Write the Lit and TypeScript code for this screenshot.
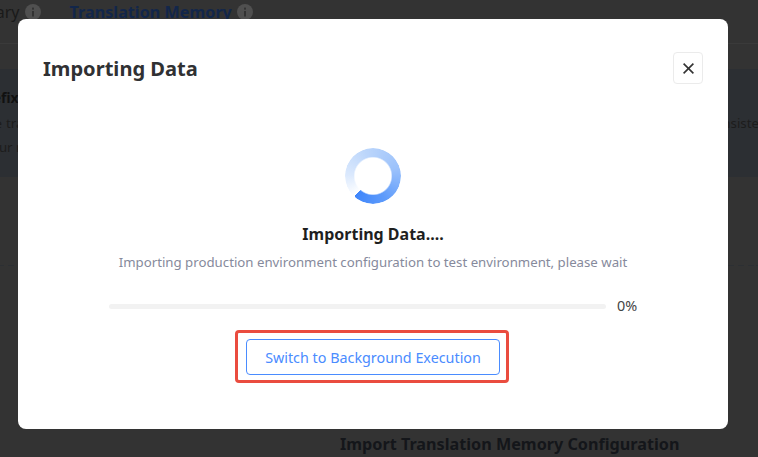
import { LitElement, html, css } from "lit";
import { customElement } from "lit/decorators.js";

const info = html`<svg class="info" viewBox="0 0 16 16"><circle cx="8" cy="8" r="8" fill="#505050"></circle><rect x="7" y="7" width="2" height="5.5" fill="#333"></rect><rect x="7" y="3.6" width="2" height="2" fill="#333"></rect></svg>`;

@customElement("app-root")
export class AppRoot extends LitElement {
  static styles = css`
    :host {
      display: block;
      position: relative;
      width: 758px;
      height: 457px;
      overflow: hidden;
      background: #333;
      font-family: "Noto Sans", "Open Sans", sans-serif;
    }
    .page { display: flex; flex-direction: column; height: 100%; }
    .tabs {
      height: 44px;
      box-sizing: border-box;
      border-bottom: 1px solid #3a3a3a;
      display: flex;
      align-items: flex-start;
      padding-top: 1px;
      margin-left: -45px;
      gap: 29px;
      font-size: 16px;
      line-height: 22px;
      color: #1a1a1a;
    }
    .tab { display: flex; align-items: center; gap: 5px; white-space: nowrap; }
    .tab.active { color: #12264a; font-weight: 700; font-size: 16.2px; }
    .info { width: 16px; height: 16px; }
    .banner {
      margin-top: 25px;
      height: 108px;
      background: #2c2f33;
      box-sizing: border-box;
      padding-top: 17px;
      color: #1c1c1c;
      font-size: 13.3px;
      line-height: 24.5px;
      white-space: nowrap;
    }
    .banner b { color: #111; font-size: 14px; display: block; margin-left: -22px; }
    .line2 { margin-left: -21px; word-spacing: 0.45px; }
    .line3 { margin-left: -16px; }
    .dash {
      margin-top: 88px;
      height: 1px;
      background: repeating-linear-gradient(90deg, #2c2f33 0 6px, transparent 6px 10px);
      background-position: -2px 0;
    }
    .lower {
      margin-top: 167px;
      padding-left: 340px;
      font-size: 16.2px;
      font-weight: 700;
      line-height: 22px;
      color: #14161a;
      white-space: nowrap;
    }
    .modal {
      position: absolute;
      left: 18px;
      top: 19px;
      width: 710px;
      height: 410px;
      background: #fff;
      border-radius: 8px;
      box-sizing: border-box;
      padding: 33px 25px 0;
      display: flex;
      flex-direction: column;
    }
    .head { display: flex; justify-content: space-between; align-items: flex-start; }
    h2 { margin: 1px 0 0; font-size: 20.1px; line-height: 32px; font-weight: 700; color: #303133; }
    .close {
      width: 30px;
      height: 32px;
      box-sizing: border-box;
      border: 1px solid #ebebeb;
      border-radius: 4px;
      display: flex;
      align-items: center;
      justify-content: center;
      background: #fff;
      padding: 0;
    }
    .close svg { width: 11px; height: 11px; }
    .body { display: flex; flex-direction: column; align-items: center; padding-top: 63px; }
    .spinner {
      width: 56px;
      height: 56px;
      border-radius: 50%;
      background: conic-gradient(from 222deg, #fff 0deg, #dbe9fd 50deg, #bcd6fb 120deg, #9cc2fb 210deg, #5e9bfb 290deg, #3f86fb 360deg);
      -webkit-mask: radial-gradient(circle, transparent 18px, #000 19.5px);
      mask: radial-gradient(circle, transparent 18px, #000 19.5px);
    }
    .title { margin-top: 18px; font-size: 16px; line-height: 24px; font-weight: 700; color: #1f1f1f; }
    .desc { margin-top: 6px; font-size: 13.24px; line-height: 20px; color: #868a9c; white-space: nowrap; }
    .progress { margin-top: 24px; display: flex; align-items: center; gap: 11px; align-self: flex-start; margin-left: 66px; }
    .track { width: 497px; height: 5px; border-radius: 3px; background: #f2f2f2; }
    .pct { font-size: 14.4px; line-height: 20px; color: #444; }
    .highlight {
      margin: 14px 0 0 -2px;
      width: 274px;
      height: 53px;
      box-sizing: border-box;
      border: 3px solid #ea4c3f;
      border-radius: 4px;
      padding: 1px 0 0 2px;
      display: flex;
      align-items: center;
      justify-content: center;
    }
    .bg-btn {
      width: 254px;
      height: 36px;
      box-sizing: border-box;
      border: 1px solid #4a8cff;
      border-radius: 4px;
      background: #fff;
      color: #4a8cff;
      font: inherit;
      font-size: 14.33px;
      padding: 0;
    }
  `;

  render() {
    return html`
      <div class="page">
        <div class="tabs">
          <div class="tab">Glossary ${info}</div>
          <div class="tab active">Translation Memory ${info}</div>
        </div>
        <div class="banner">
          <b>Prefix</b>
          <div class="line2">The translation memory stores translated segments and reuses them during new translation tasks to keep wording consistent</div>
          <div class="line3">Your memory</div>
        </div>
        <div class="dash"></div>
        <div class="lower">Import Translation Memory Configuration</div>
      </div>
      <div class="modal" role="dialog">
        <div class="head">
          <h2>Importing Data</h2>
          <button class="close" aria-label="Close">
            <svg viewBox="0 0 11 11"><path d="M0.6 0.6 10.4 10.4M10.4 0.6 0.6 10.4" stroke="#333" stroke-width="1.6" fill="none"></path></svg>
          </button>
        </div>
        <div class="body">
          <div class="spinner"></div>
          <div class="title">Importing Data....</div>
          <div class="desc">Importing production environment configuration to test environment, please wait</div>
          <div class="progress"><div class="track"></div><div class="pct">0%</div></div>
          <div class="highlight"><button class="bg-btn">Switch to Background Execution</button></div>
        </div>
      </div>
    `;
  }
}
